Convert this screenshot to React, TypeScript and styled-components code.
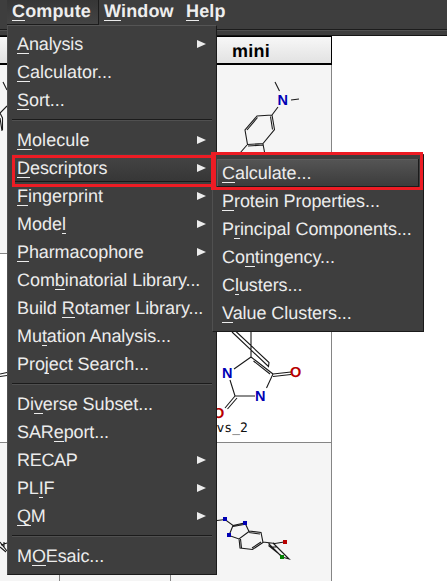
import React from "react";
import styled, { createGlobalStyle, css } from "styled-components";

const Global = createGlobalStyle`
  html, body { margin: 0; background: #fff; }
  body {
    overflow: hidden;
    font-family: "Liberation Sans", Arial, sans-serif;
    text-rendering: geometricPrecision;
  }
`;

const Window = styled.div`
  position: relative;
  width: 447px;
  height: 581px;
  overflow: hidden;
  background: #fff;
`;

const MenuBar = styled.div`
  box-sizing: border-box;
  height: 29px;
  padding-left: 7px;
  display: flex;
  background: #3e3e3e;
`;

const BarItem = styled.div<{ $open?: boolean; $width: number }>`
  box-sizing: border-box;
  width: ${(p) => p.$width}px;
  height: 25px;
  padding-left: 5px;
  font-size: 18px;
  font-weight: bold;
  line-height: 23px;
  letter-spacing: 0.14px;
  color: #eee;
  white-space: nowrap;
  ${(p) =>
    p.$open &&
    css`
      background: linear-gradient(#363636, #444);
      border-right: 1px solid #1c1c1c;
      border-bottom: 1px solid #1c1c1c;
    `}
`;

const ToolStrip = styled.div`
  box-sizing: border-box;
  height: 7px;
  background: #3e3e3e;
  border-top: 1px solid #1c1c1c;
  border-bottom: 1px solid #161616;
  box-shadow: inset 0 1px #505050;
`;

const Table = styled.div`
  width: 332px;
  display: grid;
  grid-template-columns: 60px 111px 161px;
  grid-template-rows: 29px 189px 189px 140px;
`;

const HeadCell = styled.div`
  box-sizing: border-box;
  border: solid #000;
  border-width: 1px 1px 2px 0;
  background: linear-gradient(#f7f7f7, #e2e2e2);
  padding-left: 61px;
  font-size: 18px;
  font-weight: bold;
  line-height: 28px;
  letter-spacing: 0.25px;
  color: #000;
`;

const Cell = styled.div<{ $shade?: boolean }>`
  box-sizing: border-box;
  border: solid #858585;
  border-width: 0 1px 1px 0;
  background: ${(p) => (p.$shade ? "#f5f5f5" : "#fff")};
`;

const Drawing = styled.svg`
  position: absolute;
  left: 0;
  top: 0;
  fill: none;
  stroke: #1a1a1a;
  stroke-width: 1.1;
`;

const Atom = styled.text<{ $color: string }>`
  fill: ${(p) => p.$color};
  stroke: none;
  font: bold 14.5px "Liberation Sans", Arial, sans-serif;
`;

const Caption = styled.text`
  fill: #111;
  stroke: none;
  font: 13px "DejaVu Sans Mono", monospace;
`;

const Menu = styled.div<{ $x: number; $y: number; $w: number }>`
  position: absolute;
  left: ${(p) => p.$x}px;
  top: ${(p) => p.$y}px;
  width: ${(p) => p.$w}px;
  box-sizing: border-box;
  padding: 4px 4px;
  border: 1px solid #1b1b1b;
  border-top-color: #555;
  border-left-color: #505050;
  background: #3e3e3e;
`;

const Row = styled.div<{ $state?: "open" | "active" }>`
  box-sizing: border-box;
  height: 28px;
  padding: 0 6px 0 5px;
  display: flex;
  align-items: center;
  justify-content: space-between;
  color: #ececec;
  ${(p) =>
    p.$state === "open" &&
    css`
      background: linear-gradient(#454545, #363636);
      box-shadow: inset 0 -1px #181818;
    `}
  ${(p) =>
    p.$state === "active" &&
    css`
      background: linear-gradient(#555, #3b3b3b);
      box-shadow: inset -1px -1px #1b1b1b, inset 1px 1px #5e5e5e;
    `}
`;

const Label = styled.span<{ $track?: number }>`
  font-size: 18px;
  line-height: 28px;
  letter-spacing: ${(p) => p.$track ?? -0.06}px;
  white-space: pre;
`;

const Mnemonic = styled.span`
  background: linear-gradient(#ececec, #ececec) left bottom / 100% 1px no-repeat;
`;

const Arrow = styled.span`
  flex: none;
  width: 0;
  height: 0;
  border-left: 9px solid #ececec;
  border-top: 4.5px solid transparent;
  border-bottom: 4.5px solid transparent;
`;

const Divider = styled.div`
  height: 1px;
  margin: 5px 0;
  border-top: 1px solid #1b1b1b;
  background: #505050;
`;

const Highlight = styled.div<{ $x: number; $y: number; $w: number; $h: number; $left: number; $right: number }>`
  position: absolute;
  box-sizing: border-box;
  left: ${(p) => p.$x}px;
  top: ${(p) => p.$y}px;
  width: ${(p) => p.$w}px;
  height: ${(p) => p.$h}px;
  border: 3px solid #ed1c24;
  border-left-width: ${(p) => p.$left}px;
  border-right-width: ${(p) => p.$right}px;
`;

/* An ampersand marks the letter that follows it as the keyboard mnemonic. */
function Caps({ text }: { text: string }) {
  const at = text.indexOf("&");
  if (at < 0) return <>{text}</>;
  return (
    <>
      {text.slice(0, at)}
      <Mnemonic>{text[at + 1]}</Mnemonic>
      {text.slice(at + 2)}
    </>
  );
}

type Entry = { text: string; sub?: boolean; state?: "open" | "active"; track?: number };

const groups: Entry[][] = [
  [
    { text: "&Analysis", sub: true, track: -0.12 },
    { text: "&Calculator...", track: 0 },
    { text: "&Sort..." },
  ],
  [
    { text: "&Molecule", sub: true, track: 0.05 },
    { text: "&Descriptors", sub: true, state: "open" },
    { text: "&Fingerprint", sub: true, track: 0 },
    { text: "Mode&l", sub: true, track: 0 },
    { text: "&Pharmacophore", sub: true, track: -0.1 },
    { text: "Com&binatorial Library..." },
    { text: "Build &Rotamer Library..." },
    { text: "Mu&tation Analysis..." },
    { text: "Pro&ject Search..." },
  ],
  [
    { text: "Di&verse Subset..." },
    { text: "SAR&eport...", track: -0.1 },
    { text: "RECAP", sub: true, track: -0.3 },
    { text: "PL&IF", sub: true, track: -0.2 },
    { text: "&QM", sub: true, track: -0.3 },
  ],
  [{ text: "M&OEsaic...", track: -0.1 }],
];

const submenu: Entry[] = [
  { text: "&Calculate...", state: "active" },
  { text: "&Protein Properties..." },
  { text: "P&rincipal Components..." },
  { text: "Co&ntingency..." },
  { text: "C&lusters..." },
  { text: "&Value Clusters..." },
];

function MenuRow({ entry }: { entry: Entry }) {
  return (
    <Row $state={entry.state}>
      <Label $track={entry.track}>
        <Caps text={entry.text} />
      </Label>
      {entry.sub && <Arrow />}
    </Row>
  );
}

function Molecules() {
  return (
    <Drawing width="447" height="581" viewBox="0 0 447 581">
      <path d="M275 82l4.500 9M291 100l8-1M278 107l-6 8M272 115l-15 1-12 14 2.500 14.500 15.500-1 11.500-14zM270.500 116.500l2 13M247 130l10.500-12.500M248 146l15-1M247 145l-7 8M263 144l1.500 8" />
      <Atom x="277.500" y="104.500" $color="#0000b4">N</Atom>

      <path d="M251 331v26M251 357l22 17-6.500 14M251 357l-17 12M230 380l5 16h20M232 332l36.500 34.500.500-4-33-31M253.500 361l16.500 13M273 374l18-2M273 376.500l18-2M235 396l-10 12M237 398l-9.500 11" />
      <Atom x="222" y="377.500" $color="#0000b4">N</Atom>
      <Atom x="255" y="400.500" $color="#0000b4">N</Atom>
      <Atom x="290" y="376.500" $color="#b80000">O</Atom>
      <Atom x="213" y="418" $color="#b80000">O</Atom>
      <Caption x="216.500" y="432">vs_2</Caption>

      <path d="M217 520.500l8-1 8 6 12-2.500 4 8.500-10 7.500-10-3.500 4-10M249 531l12 1.500 2 10-10.500 7-12.500-1.500-1-9.500M233 526.500l11-2M249 532.500l11 1.500M252 548l9-6M241.500 548l-1-9M263 542l12 1.500 9-1.500M268.500 543.500l13 13M268.500 545.500l12.500 10M273 543l16 16-7-2M272 547l4.500 0" />
      <path stroke="none" fill="#0000b4" d="M223 517h4v4h-4zM243 521h4v4h-4zM227 533h4v4h-4z" />
      <path stroke="none" fill="#b80000" d="M283 540h4v4h-4z" />
      <path stroke="none" fill="#008000" d="M280 555h4v4h-4z" />

      <path d="M3 82l4 8M7 106l-7 7 2.500 5v12M0 118l2 13M0 374l7-1.500M0 376.500l7-1M0 542l7 9M0 547l6 5M1 545l6-2M4 542v5" />
    </Drawing>
  );
}

export default function App() {
  return (
    <Window>
      <Global />
      <MenuBar>
        <BarItem $open $width={92}><Caps text="&Compute" /></BarItem>
        <BarItem $width={82}><Caps text="&Window" /></BarItem>
        <BarItem $width={60}><Caps text="&Help" /></BarItem>
      </MenuBar>
      <ToolStrip />
      <Table>
        <HeadCell /><HeadCell /><HeadCell>mini</HeadCell>
        <Cell $shade /><Cell $shade /><Cell $shade />
        <Cell /><Cell /><Cell />
        <Cell $shade /><Cell $shade /><Cell $shade />
      </Table>
      <Molecules />
      <Menu $x={7} $y={25} $w={210}>
        {groups.map((group, i) => (
          <React.Fragment key={i}>
            {i > 0 && <Divider />}
            {group.map((entry) => <MenuRow key={entry.text} entry={entry} />)}
          </React.Fragment>
        ))}
      </Menu>
      <Menu $x={212} $y={154} $w={212}>
        {submenu.map((entry) => <MenuRow key={entry.text} entry={entry} />)}
      </Menu>
      <Highlight $x={12} $y={155} $w={201} $h={32} $left={3} $right={0} />
      <Highlight $x={211} $y={152} $w={212} $h={38} $left={5} $right={3} />
    </Window>
  );
}
